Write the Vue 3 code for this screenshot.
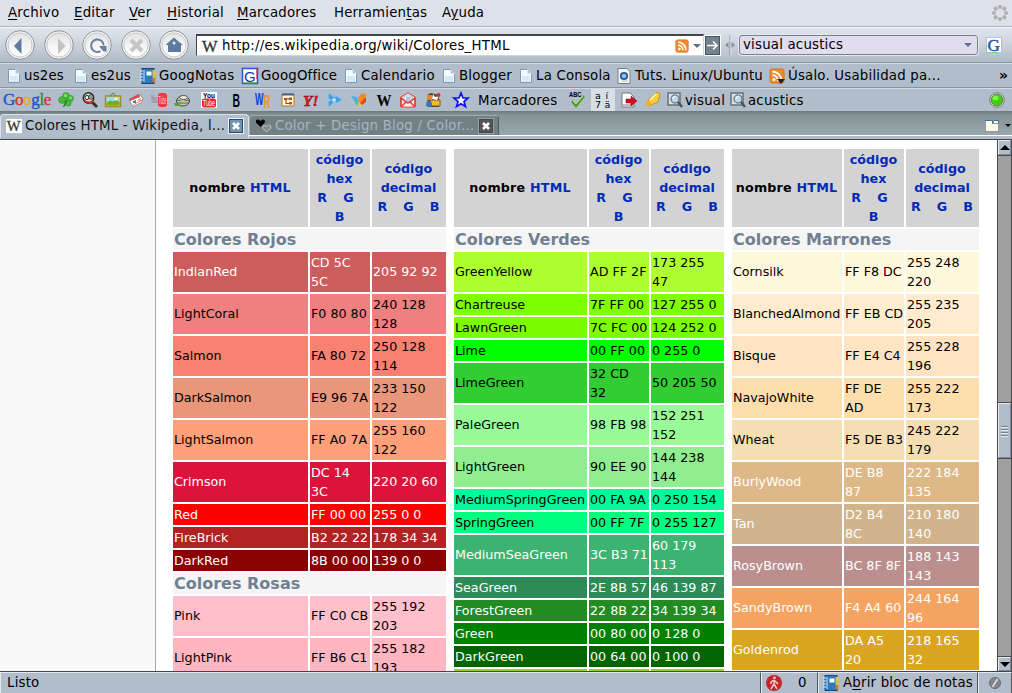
<template>
    <div class="browser">
        <nav class="menu">
            <span v-for="m in menus" :key="m.key" :style="{ width: m.w + 'px' }">{{ m.a }}<u>{{ m.key }}</u>{{ m.b }}</span>
            <svg class="throbber" width="18" height="18" viewBox="0 0 18 18">
                <circle v-for="n in 8" :key="n" cx="9" cy="2.9" r="2.1" :transform="`rotate(${n * 45} 9 9)`" />
            </svg>
        </nav>

        <div class="nav">
            <svg v-for="b in buttons" :key="b" class="round" width="32" height="32" viewBox="0 0 32 32">
                <defs>
                    <linearGradient :id="'g' + b" x2="0" y2="1">
                        <stop offset="0" stop-color="#e2e2e2" />
                        <stop offset=".5" stop-color="#f3f3f3" />
                        <stop offset="1" stop-color="#fff" />
                    </linearGradient>
                </defs>
                <circle cx="16" cy="16" r="14.3" fill="#f0f0f0" stroke="#8f959c" />
                <circle cx="16" cy="16" r="12" :fill="`url(#g${b})`" stroke="#c9c9c9" />
                <g v-html="icons[b]"></g>
            </svg>
            <div class="url">
                <svg width="18" height="16" viewBox="0 0 18 16" v-html="icons.wiki"></svg>
                <span>http://es.wikipedia.org/wiki/Colores_HTML</span>
                <svg class="feed" width="14" height="14" viewBox="0 0 16 16" v-html="icons.rss"></svg>
                <i class="arrow"></i>
            </div>
            <div class="go">
                <svg width="13" height="13" viewBox="0 0 13 13">
                    <path d="M1 6.500H11M7 2.500l4 4-4 4" fill="none" stroke="#fff" stroke-width="1.600" />
                </svg>
            </div>
            <svg class="split" width="10" height="20" viewBox="0 0 10 20">
                <path d="M5 0v20" stroke="#84909a" />
                <path d="M6 0v20" stroke="#e5e9ee" />
                <path d="M0 10l3.500-3v6zM10 10L6.500 7v6z" fill="#84909a" />
            </svg>
            <div class="search"><span>visual acustics</span><i class="arrow"></i></div>
            <svg class="engine" width="16" height="16" viewBox="0 0 16 16" v-html="icons.g"></svg>
        </div>

        <div class="bookmarks">
            <div v-for="b in bookmarks" :key="b.text" class="bookmark" :style="{ width: b.w + 'px' }">
                <svg width="16" height="16" viewBox="0 0 16 16" v-html="icons[b.icon]"></svg>
                <span>{{ b.text }}</span>
            </div>
            <b class="more">»</b>
        </div>

        <div class="tools">
            <div class="google"><b>G</b><b>o</b><b>o</b><b>g</b><b>l</b><b>e</b></div>
            <div v-for="(t, i) in tools" :key="i" class="tool" :class="t[0]" :style="{ width: t[1] + 'px' }">
                <span v-if="t[2]">{{ t[2] }}</span>
                <svg v-else width="16" height="16" viewBox="0 0 16 16" v-html="icons[t[0]]"></svg>
            </div>
            <svg class="status-dot" width="16" height="16" viewBox="0 0 16 16">
                <circle cx="8" cy="8" r="7.300" fill="#e3e7e8" stroke="#777" />
                <circle cx="8" cy="8" r="5.800" fill="#42cf0c" stroke="#587f45" />
                <ellipse cx="6.500" cy="6" rx="3" ry="2.500" fill="#83ec53" />
            </svg>
        </div>

        <div class="tabs">
            <div class="tab active">
                <svg width="16" height="16" viewBox="0 0 18 16"><path d="M0 0h18v16H0z" fill="#fff" /><g v-html="icons.wiki"></g></svg>
                <span>Colores HTML - Wikipedia, l...</span>
                <svg class="close" width="16" height="16" viewBox="0 0 16 16" v-html="icons.close"></svg>
            </div>
            <div class="tab">
                <svg width="18" height="16" viewBox="0 0 18 16" v-html="icons.hearts"></svg>
                <span>Color + Design Blog / Color...</span>
                <svg class="close" width="16" height="16" viewBox="0 0 16 16" v-html="icons.close"></svg>
            </div>
            <svg class="tab-list" width="28" height="16" viewBox="0 0 28 16">
                <path d="M1.500 3.500h7v3h6v8h-13z" fill="#fbfbe5" stroke="#8c9bab" />
                <path d="M1 3.500h7.500v3M10 3.500h4.500v3" fill="none" stroke="#4b6b98" />
                <path d="M10 4h4v2h-4z" fill="#f4f8ff" />
                <path d="M21 7h6l-3 3z" />
            </svg>
        </div>

        <main>
            <aside></aside>
            <div class="page">
                <section v-for="(col, i) in columns" :key="i" :class="'col' + i">
                    <div class="th"><p>nombre <a>HTML</a></p></div>
                    <div class="th"><a>código<br>hex<br><em>R&nbsp;&nbsp;&nbsp; G&nbsp;&nbsp;</em><br>B</a></div>
                    <div class="th"><a>código<br>decimal<br><em>R&nbsp;&nbsp;&nbsp; G&nbsp;&nbsp;&nbsp; B</em></a></div>
                    <template v-for="c in col" :key="c[0]">
                        <h3 v-if="c.length === 1">{{ c[0] }}</h3>
                        <template v-else>
                            <div v-for="n in 3" :key="n" class="td" :class="{ light: c[3] }" :style="{ background: c[0] }">{{ c[n - 1] }}</div>
                        </template>
                    </template>
                </section>
            </div>
            <div class="scroll">
                <div class="knob up"><i></i></div>
                <div class="knob thumb"><i></i><i></i><i></i><i></i></div>
                <div class="knob down"><i></i></div>
            </div>
        </main>

        <footer>
            <div class="ready">Listo</div>
            <div class="count">
                <svg width="16" height="16" viewBox="0 0 16 16">
                    <circle cx="8" cy="8" r="8" fill="#c4242b" />
                    <circle cx="8.500" cy="2.800" r="1.400" fill="#efc9c8" />
                    <path d="M8 5L5 7v2M8 5v4l-3 5M8 9l3 5M8 5l3 3 1 1" fill="none" stroke="#efc9c8" stroke-width="1.500" />
                </svg>
                <span>0</span>
            </div>
            <div class="notes">
                <svg width="16" height="16" viewBox="0 0 16 16" v-html="icons.book"></svg>
                <span>A<u>b</u>rir bloc de notas</span>
            </div>
            <div class="off">
                <svg width="12" height="12" viewBox="0 0 12 12">
                    <circle cx="6" cy="6" r="5.500" fill="#858585" stroke="#6c6c6c" />
                    <path d="M3.500 10L8.500 2" stroke="#dde2e8" stroke-width="1.500" />
                </svg>
            </div>
        </footer>
    </div>
</template>

<script setup>
const menus = [
    { a: '', key: 'A', b: 'rchivo', w: 66 },
    { a: '', key: 'E', b: 'ditar', w: 55 },
    { a: '', key: 'V', b: 'er', w: 38 },
    { a: '', key: 'H', b: 'istorial', w: 70 },
    { a: '', key: 'M', b: 'arcadores', w: 97 },
    { a: 'Herramien', key: 't', b: 'as', w: 108 },
    { a: 'A', key: 'y', b: 'uda', w: 60 }
]

const buttons = ['back', 'forward', 'reload', 'stop', 'home']

const bookmarks = [
    { icon: 'page', text: 'us2es', w: 67 },
    { icon: 'page', text: 'es2us', w: 68 },
    { icon: 'book', text: 'GoogNotas', w: 102 },
    { icon: 'gbox', text: 'GoogOffice', w: 100 },
    { icon: 'page', text: 'Calendario', w: 98 },
    { icon: 'page', text: 'Blogger', w: 77 },
    { icon: 'page', text: 'La Consola', w: 99 },
    { icon: 'tuts', text: 'Tuts. Linux/Ubuntu', w: 153 },
    { icon: 'feed', text: 'Úsalo. Usabilidad pa...', w: 180 }
]

// icon name, slot width, optional label
const tools = [
    ['clover', 24], ['lens', 23], ['photo', 23], ['cards', 23], ['tubeOff', 23], ['burger', 24], ['tube', 30],
    ['bold', 24], ['wr', 29], ['tree', 22], ['yahoo', 24], ['twist', 23], ['butterfly', 25], ['wikiBold', 25],
    ['mail', 23], ['box', 28], ['star', 28], ['label', 90, 'Marcadores'], ['abc', 23], ['accents', 30],
    ['exit', 22], ['marker', 26], ['find', 17], ['label', 46, 'visual'], ['find', 17], ['label', 70, 'acustics']
]

// Each color: name, hex, decimal, light text
const columns = [
    [
        ['Colores Rojos'],
        ['IndianRed', 'CD 5C\n5C', '205 92 92', 1],
        ['LightCoral', 'F0 80 80', '240 128\n128'],
        ['Salmon', 'FA 80 72', '250 128\n114'],
        ['DarkSalmon', 'E9 96 7A', '233 150\n122'],
        ['LightSalmon', 'FF A0 7A', '255 160\n122'],
        ['Crimson', 'DC 14\n3C', '220 20 60', 1],
        ['Red', 'FF 00 00', '255 0 0', 1],
        ['FireBrick', 'B2 22 22', '178 34 34', 1],
        ['DarkRed', '8B 00 00', '139 0 0', 1],
        ['Colores Rosas'],
        ['Pink', 'FF C0 CB', '255 192\n203'],
        ['LightPink', 'FF B6 C1', '255 182\n193']
    ],
    [
        ['Colores Verdes'],
        ['GreenYellow', 'AD FF 2F', '173 255\n47'],
        ['Chartreuse', '7F FF 00', '127 255 0'],
        ['LawnGreen', '7C FC 00', '124 252 0'],
        ['Lime', '00 FF 00', '0 255 0'],
        ['LimeGreen', '32 CD\n32', '50 205 50'],
        ['PaleGreen', '98 FB 98', '152 251\n152'],
        ['LightGreen', '90 EE 90', '144 238\n144'],
        ['MediumSpringGreen', '00 FA 9A', '0 250 154'],
        ['SpringGreen', '00 FF 7F', '0 255 127'],
        ['MediumSeaGreen', '3C B3 71', '60 179\n113', 1],
        ['SeaGreen', '2E 8B 57', '46 139 87', 1],
        ['ForestGreen', '22 8B 22', '34 139 34', 1],
        ['Green', '00 80 00', '0 128 0', 1],
        ['DarkGreen', '00 64 00', '0 100 0', 1],
        ['YellowGreen', '', '']
    ],
    [
        ['Colores Marrones'],
        ['Cornsilk', 'FF F8 DC', '255 248\n220'],
        ['BlanchedAlmond', 'FF EB CD', '255 235\n205'],
        ['Bisque', 'FF E4 C4', '255 228\n196'],
        ['NavajoWhite', 'FF DE\nAD', '255 222\n173'],
        ['Wheat', 'F5 DE B3', '245 222\n179'],
        ['BurlyWood', 'DE B8\n87', '222 184\n135', 1],
        ['Tan', 'D2 B4\n8C', '210 180\n140', 1],
        ['RosyBrown', 'BC 8F 8F', '188 143\n143', 1],
        ['SandyBrown', 'F4 A4 60', '244 164\n96', 1],
        ['Goldenrod', 'DA A5\n20', '218 165\n32', 1]
    ]
]

const rss = '<rect x="1" y="1" width="14" height="14" rx="2" fill="#f18a2b" stroke="#d9741b"/><circle cx="5" cy="11.500" r="1.500" fill="#fff"/><path d="M3.500 7a6 6 0 0 1 5.500 6M3.500 3.500a9.500 9.500 0 0 1 9 9.500" fill="none" stroke="#fff" stroke-width="1.800"/>'
const serif = 'font-family="Liberation Serif, serif"'
const sans = 'font-family="Liberation Sans, sans-serif"'

const icons = {
    back: '<path d="M10 17L17.500 9v16z" fill="#5f7a9f"/>',
    forward: '<path d="M22.500 17L15 9v16z" fill="#c3c3c3"/>',
    reload: '<path d="M19.500 22.200a6.300 6.300 0 1 1 3.200-5.700" fill="none" stroke="#6880a0" stroke-width="2"/><path d="M18 17h7.500v5.500h-3z" fill="#6880a0"/>',
    stop: '<path d="M11 11l11 11M22 11L11 22" stroke="#c5c5c5" stroke-width="4"/>',
    home: '<path d="M7.500 16L12 12l4-3.500 4 3.500 5 4h-2v7H10v-7z" fill="#5f7a9f"/><circle cx="16" cy="14" r="1.500" fill="#eee"/>',
    wiki: `<text x="1" y="13.500" ${serif} font-size="16" textLength="15.500" lengthAdjust="spacingAndGlyphs" fill="#333" stroke="#333" stroke-width=".3">W</text>`,
    rss,
    feed: rss + '<path d="M8 11h8l-4 5z" fill="#222"/>',
    g: `<rect x=".5" y=".5" width="15" height="15" fill="#fff" stroke="#b3c6e8"/><path d="M15.500 0v12" stroke="#e8a6a6"/><path d="M0 15.500h12M.5 8v8" stroke="#8ccf8c"/><text x="1.500" y="13.500" ${serif} font-size="17" fill="#2952a8" stroke="#2952a8" stroke-width=".5">G</text>`,
    gbox: `<rect x=".5" y=".5" width="15" height="15" fill="#fff" stroke="#2a56cc" stroke-width="1.500"/><path d="M15.200 1v10" stroke="#d22" stroke-width="1.500"/><path d="M2 15.200h13" stroke="#2a9a2a" stroke-width="1.500"/><text x="2" y="13.500" ${sans} font-size="15" fill="#1538bd">G</text>`,
    page: '<path d="M3.500 1.500h7l4 4v9h-11z" fill="#f5fbff" stroke="#7e9abb"/><path d="M5 8h8v6H5z" fill="#d5eaf7"/><path d="M10.500 1.500v4h4z" fill="#9dc2e0" stroke="#e9f5ff" stroke-width=".5"/>',
    book: '<rect x="2" y=".5" width="12" height="15" fill="#2d79bd" stroke="#164a7a"/><path d="M4 2v12" stroke="#75b3e2" stroke-width="2"/><path d="M6.500 3.500h5v4h-5z" fill="#fff"/><path d="M14 2v4" stroke="#f3bd35" stroke-width="3"/><path d="M14 6v4" stroke="#b8cc4b" stroke-width="3"/><path d="M14 10v4" stroke="#d47b2e" stroke-width="3"/><path d="M0 3h3M0 6h3M0 9h3M0 12h3" stroke="#e4f2fc"/>',
    tuts: '<path d="M2 .5h9l3 3v12H2z" fill="#f6f6ef" stroke="#777c80"/><circle cx="8" cy="8" r="3.200" fill="#8ec0e8" stroke="#285a9b" stroke-width="1.800"/><path d="M6 13h6" stroke="#b6c5cf"/>',
    clover: '<g fill="#4ab83e" stroke="#2c9a2c" stroke-width=".6"><circle cx="8" cy="4" r="3.400"/><circle cx="4" cy="8" r="3.400"/><circle cx="12.300" cy="6.500" r="3.200"/><circle cx="10" cy="11" r="3.200"/></g><path d="M8.500 8q-1 4-3 7" fill="none" stroke="#207b21" stroke-width="1.300"/><circle cx="7.500" cy="3.500" r="1.600" fill="#8ae373"/><circle cx="12.500" cy="6" r="1.400" fill="#7bdb66"/>',
    lens: '<path d="M10 10l5 5" stroke="#333" stroke-width="3"/><circle cx="6.500" cy="6" r="5.200" fill="#ddd6bb" stroke="#282828" stroke-width="1.500"/><circle cx="5" cy="5.500" r="2" fill="#fff" stroke="#222"/><circle cx="9" cy="5" r="2.200" fill="#fff" stroke="#222"/><circle cx="9" cy="5" r=".8"/><path d="M3 9q4 3 8 0" stroke="#cc2c23" stroke-width="2" fill="none"/>',
    photo: '<path d="M5 4l3-3 3 3" stroke="#776d36" fill="none"/><rect x=".5" y="4" width="15" height="10.500" fill="#9cdaf0" stroke="#ac8b1e" stroke-width="1.500"/><path d="M1.500 13.500v-3l4-2 3 1 3-2 3 3v3z" fill="#75ab20"/><circle cx="11" cy="7" r="1.500" fill="#fff7ad"/>',
    cards: '<path d="M1 8l10-6 4 4-1 4-9 5z" fill="#fff" stroke="#aa8383"/><path d="M1 7l10-5 1 3-10 4z" fill="#d84a4a"/><path d="M5 9l3-1v3H5z" fill="#4979be"/><path d="M10 7l3-1v3h-3z" fill="#ecac6a"/><path d="M5 13l9-5" stroke="#d38888"/>',
    tubeOff: `<text x="0" y="11" ${sans} font-size="10" font-weight="bold" textLength="6.500" lengthAdjust="spacingAndGlyphs" fill="#85888b">You</text><rect x="7" y="1" width="9" height="14" rx="3" fill="#ed373c"/><text x="7.500" y="12" ${sans} font-size="11" textLength="8" lengthAdjust="spacingAndGlyphs" fill="#ffd8d8">Tube</text>`,
    burger: '<ellipse cx="9" cy="9" rx="6.500" ry="5" fill="#c3c7c2" stroke="#3e4443"/><ellipse cx="9.500" cy="5.500" rx="4" ry="2" fill="#f0f0eb" stroke="#555"/><path d="M3 8q6 3 12 0M3 11h12" fill="none" stroke="#555d5a"/><path d="M0 11h6v3H1z" fill="#5f9e36"/><path d="M7 9l5 1" stroke="#e1c641" stroke-width="1.500"/>',
    tube: `<path d="M0 0h16v16H0z" fill="#fff"/><rect x="1" y="6.500" width="14" height="9" rx="2" fill="#ee2229"/><text x="2" y="6" ${sans} font-size="7.500" font-weight="bold" textLength="12" lengthAdjust="spacingAndGlyphs">You</text><text x="2" y="14" ${sans} font-size="9" textLength="12" lengthAdjust="spacingAndGlyphs" fill="#fff">Tube</text>`,
    bold: `<text x="4.500" y="14.500" ${sans} font-size="19" font-weight="bold" textLength="7.500" lengthAdjust="spacingAndGlyphs">B</text>`,
    wr: `<text x="0" y="12.500" ${sans} font-size="16" font-weight="bold" textLength="8.500" lengthAdjust="spacingAndGlyphs" fill="#1238d8">W</text><text x="8.500" y="15.500" ${sans} font-size="18" font-weight="bold" textLength="7" lengthAdjust="spacingAndGlyphs" fill="#ee9431">R</text>`,
    tree: '<path d="M2 2h12v12H2z" fill="#fffbdd" stroke="#bb7612"/><path d="M2 2.500h12" stroke="#3c63a0" stroke-width="2"/><path d="M6 7v5M6 7h3M6 11.500h3" stroke="#a32d16" fill="none"/><path d="M4 6h3v2H4zM9 5.500h3v2.500H9zM9 10h3v2.500H9z" fill="#bf4d22"/>',
    yahoo: `<text x="0" y="14" ${serif} font-size="15" font-weight="bold" font-style="italic" fill="#e9101c" stroke="#8e0710" stroke-width=".5" textLength="15.500" lengthAdjust="spacingAndGlyphs">Y!</text>`,
    twist: '<path d="M2 1l5 4 3-1 5 4-5 3-3-1-5 5-1-5 3-2-3-2z" fill="#4b9edb" stroke="#7cc3ef"/><circle cx="7" cy="8" r="2" fill="#b3e4fa"/>',
    butterfly: '<path d="M0 4l6 1 2 6-4-1z" fill="#4aaee9"/><path d="M7.500 9q-1-7 6-8l2 3-5 7z" fill="#f08a25"/><path d="M9 11l6-6v5l-4 3z" fill="#f04020"/><path d="M3 10l5 1-1 3z" fill="#7dbb36"/><path d="M7 11l4 2-3 2z" fill="#f5cb28"/>',
    wikiBold: `<text x=".5" y="13.500" ${serif} font-size="16" font-weight="bold" textLength="15" lengthAdjust="spacingAndGlyphs">W</text>`,
    mail: '<path d="M1 5l7-4 7 4v10H1z" fill="#fff1ee" stroke="#dd403a"/><path d="M4 4h8v6H4z" fill="#fff" stroke="#a9b7d7"/><path d="M1 15V6l7 5 7-5v9M1 15l5-5M15 15l-5-5" fill="none" stroke="#dd403a" stroke-width="1.500"/><path d="M6 6h5M6 8h4" stroke="#6e86c9"/>',
    box: '<path d="M2 3l4-2 8 2v12H3z" fill="#4b4734"/><path d="M5 8h10v6H6z" fill="#f1ba2e" stroke="#795715"/><circle cx="4" cy="12" r="3" fill="#3a72c4"/><path d="M2 3h5v5H2z" fill="#e7852f"/><path d="M8 2l2 3 4-1-2 4-5-1z" fill="#fff"/><circle cx="13.500" cy="3" r="2" fill="#d92f27"/>',
    star: '<path d="M8 1l2 5h5l-4 3.500 1.500 5L8 11.700 3.500 14.500l1.500-5L1 6h5z" fill="#f5f6ff" stroke="#1111e8" stroke-width="1.700"/>',
    abc: `<text x="0" y="5" ${sans} font-size="7" font-weight="bold" textLength="12.500" lengthAdjust="spacingAndGlyphs">ABC</text><path d="M3 9l4 5 8-10" fill="none" stroke="#4e9d22" stroke-width="2.500"/><path d="M4 9l3 3 7-8" fill="none" stroke="#a8e375"/>`,
    accents: '<g font-family="DejaVu Sans, sans-serif" font-size="9.500"><text x="0" y="6.500">a</text><text x="10.500" y="6.500">í</text><text x="0" y="16">7</text><text x="9.500" y="16">ä</text></g>',
    exit: '<path d="M1 1h8l4 4v10H1z" fill="#fff" stroke="#777"/><path d="M2 12h10v3H2z" fill="#bbb"/><path d="M5 7h5V4l6 5-6 5v-3H5z" fill="#d50c22" stroke="#8e0012" stroke-width=".5"/>',
    marker: '<path d="M3 8l9-8 3 2-2 8-7 3z" fill="#f9cd37" stroke="#b7790d" stroke-width=".7"/><path d="M3 8l-3 5 4 2 3-3z" fill="#f7ad20"/><path d="M5 8l6-6" stroke="#fff0a7" stroke-width="2"/>',
    find: '<path d="M1 1h12v12H1z" fill="#dae3e9" stroke="#697077" stroke-width="1.500"/><circle cx="8" cy="7" r="4" fill="#b8dced" stroke="#77838c" stroke-width="1.500"/><path d="M11 10l4 5" stroke="#4d5359" stroke-width="2.500"/><path d="M6 7q0-3 3-3" fill="none" stroke="#fff"/>',
    close: '<rect x=".5" y=".5" width="15" height="15" fill="none" stroke="var(--rim)"/><rect x="1.500" y="1.500" width="13" height="13" fill="var(--face)" stroke="#3a4856"/><path d="M5 5l6 6M11 5l-6 6" stroke="#fff" stroke-width="2.500"/>',
    hearts: '<path d="M5.500 9L1 4.500Q.500 1 3.500 1.500L5.500 3l2-1.500Q11 1 9.500 5z" fill="#000"/><path d="M11.500 14L7.500 10Q7.500 7 10 7.500l1.500 1 2-1.500q3 0 2.500 3z" fill="#898989" stroke="#d8dada" stroke-width=".7"/>'
}
</script>

<style>
html,
body {
    margin: 0;
    overflow: hidden;
}
</style>

<style scoped>
.browser {
    width: 1012px;
    height: 693px;
    display: grid;
    grid-template-rows: 27px 36px 25px 23px 29px 531px 22px;
    overflow: hidden;
    background: #b2bdcb;
    color: #000;
    font: 13.33px/18px "DejaVu Sans", sans-serif;
    letter-spacing: .2px;
    white-space: nowrap;
}

.browser * {
    box-sizing: border-box;
}

svg {
    display: block;
    flex: none;
    overflow: visible;
    letter-spacing: 0;
}

u {
    text-underline-offset: 2px;
    text-decoration-thickness: 1px;
}

.menu {
    display: flex;
    align-items: center;
    padding: 0 3px 0 8px;
    background: #dde2ea;
    border-bottom: 1px solid #abb5c0;
}

.throbber {
    margin-left: auto;
    fill: #b1b1b1;
}

.nav {
    display: flex;
    align-items: center;
    padding: 0 10px 0 4px;
    background: linear-gradient(#e0e6ed, #cfd6df 40%, #aebac7);
    border-top: 1px solid #f5f7fa;
    border-bottom: 1px solid #8996a1;
}

.round {
    margin-right: 6.5px;
}

.url {
    display: flex;
    align-items: center;
    width: 508px;
    height: 22px;
    margin-left: -.5px;
    padding: 0 2px 0 4px;
    background: #fff;
    border: 1px solid #d6d2cc;
    border-top: 2px solid #444;
    border-left-color: #444;
}

.url span {
    flex: 1;
    padding-left: 3px;
    letter-spacing: .24px;
}

.arrow {
    width: 0;
    height: 0;
    border: 4px solid transparent;
    border-top-color: #58738e;
    border-bottom: 0;
}

.feed {
    margin-right: 4px;
}

.go {
    display: grid;
    place-items: center;
    width: 17px;
    height: 21px;
    background: #73838f;
    border: 1px solid #fff;
    outline: 1px solid #46525c;
    outline-offset: -2px;
}

.split {
    margin: 0 4px;
}

.search {
    display: flex;
    align-items: center;
    width: 239px;
    height: 20px;
    margin-right: 8px;
    padding: 0 5px 0 3px;
    background: #e1dcee;
    border: 1px solid #7c7f86;
    border-radius: 3px;
    box-shadow: 0 0 0 1px #e6e9ee;
}

.search span {
    flex: 1;
}

.bookmarks {
    display: flex;
    align-items: center;
    padding-left: 5px;
    border-top: 1px solid #d4dbe3;
    border-bottom: 1px solid #8996a1;
}

.bookmark {
    display: flex;
    align-items: center;
    gap: 3px;
}

.more {
    margin: -2px 0 0 50px;
    font-size: 14px;
}

.tools {
    display: flex;
    align-items: center;
    border-top: 1px solid #d4dbe3;
    padding-right: 7px;
}

.google {
    width: 54px;
    padding-left: 3px;
    font: 17px/20px "Liberation Serif", serif;
    letter-spacing: -.35px;
}

.google b {
    font-weight: normal;
    color: #2057c7;
    -webkit-text-stroke: .4px;
}

.google b:nth-child(2),
.google b:nth-child(6) {
    color: #d43730;
}

.google b:nth-child(3) {
    color: #dfad1e;
}

.google b:nth-child(5) {
    color: #299146;
}

.tool {
    display: flex;
    justify-content: center;
}

.tool.label {
    justify-content: flex-start;
    padding: 1px 0 0 2px;
}

.tool.label:nth-child(19) {
    padding-left: 3px;
}

.tool.accents {
    height: 22px;
    align-items: center;
    background: #d9dfe7;
    border: solid #b2bdcb;
    border-width: 0 3px;
}

.status-dot {
    margin-left: auto;
}

.tabs {
    display: flex;
    height: 29px;
    padding-top: 4px;
    background: linear-gradient(#6c7a7c, #849396 4px, #9aa8ad 24px, #fff 24px, #fff 25px, #b2bdcb 25px, #b2bdcb 28px, #40464c 28px);
}

.tab {
    --face: #555;
    --rim: #9a9fa2;
    display: flex;
    align-items: center;
    width: 250px;
    height: 20px;
    padding-left: 5px;
    color: #a7b5c1;
    background: #738184;
    border: 1px solid #9eaaae;
    border-right-color: #4d5a5d;
    border-bottom: 0;
    border-radius: 4px 4px 0 0;
}

.tab span {
    flex: 1;
    padding-left: 2px;
}

.tab .close {
    margin-right: 4px;
}

.tab.active {
    --face: #6f93b5;
    --rim: #eef2f5;
    width: 249px;
    height: 24px;
    margin-top: -1px;
    padding-bottom: 1px;
    color: #111;
    background: #b2bdcb;
    border-color: #dce2e8;
}

.tab.active span {
    padding-left: 3px;
}

.tab-list {
    margin: 2px 0 0 auto;
}

main {
    display: grid;
    grid-template-columns: 156px 841px 15px;
    overflow: hidden;
    background: #fff;
}

aside {
    background: #f9f9f9;
    border-right: 1px solid #aaa;
}

.page {
    display: flex;
    align-items: flex-start;
    gap: 8px;
    padding: 9px 0 0 17px;
    height: 531px;
    overflow: hidden;
    font-size: 12.7px;
    line-height: 19px;
    letter-spacing: 0;
}

section {
    display: grid;
    grid-template-columns: 133px 60px 73px;
    gap: 2px;
}

.col0 {
    grid-template-columns: 135px 60px 74px;
}

.col2 {
    grid-template-columns: 110px 60px 73px;
}

.th {
    display: flex;
    align-items: center;
    justify-content: center;
    height: 78px;
    padding: 0 1px .2px 0;
    background: #d3d3d3;
    font-weight: bold;
    text-align: center;
}

.th p {
    margin: 0;
    letter-spacing: .2px;
}

.th a {
    color: #002bb8;
}

.th em {
    font-style: normal;
    word-spacing: -.4px;
}

h3 {
    grid-column: 1 / 4;
    height: 21px;
    margin: 0;
    padding: 1px;
    color: #708090;
    background: #f5f5f5;
    font-size: 16px;
    line-height: 19px;
}

/* Uneven padding drops the half pixel of the centered single lines */
.td {
    display: flex;
    align-items: center;
    padding: .9px 1px 1.1px;
    min-height: 21px;
    white-space: pre;
}

.td.light {
    color: #fff;
}

.scroll {
    display: flex;
    flex-direction: column;
    background: #9f9f9f;
    border-left: 1px solid #4b4b4b;
    border-right: 1px solid #4b4b4b;
}

.knob {
    display: flex;
    flex-direction: column;
    align-items: center;
    justify-content: center;
    height: 15px;
    background: #b2bdcb;
    border: 1px solid #e5eaf0;
    border-right-color: #7d8996;
    border-bottom-color: #7d8996;
    box-shadow: 0 1px #4b4b4b;
}

.up i,
.down i {
    border: 5px solid transparent;
    border-bottom-color: #000;
    border-top: 0;
}

.down {
    height: 14px;
    margin-top: auto;
    box-shadow: 0 -1px #4b4b4b;
}

.down i {
    border-top: 5px solid #000;
    border-bottom: 0;
}

.thumb {
    height: 55px;
    margin-top: 248px;
    gap: 2px;
    box-shadow: 0 1px #4b4b4b, 0 -1px #4b4b4b;
}

.thumb i {
    width: 7px;
    height: 1px;
    background: #77818c;
    box-shadow: 0 1px #e6ebf0;
}

footer {
    display: flex;
    border-top: 1px solid #3f4650;
}

footer div {
    display: flex;
    align-items: center;
    border-top: 1px solid #e3e8ed;
    border-left: 1px solid #e3e8ed;
    border-right: 1px solid #4e5660;
}

.ready {
    width: 761px;
    padding-left: 6px;
}

.count {
    width: 57px;
    padding-left: 4px;
    gap: 16px;
}

.notes {
    width: 160px;
    padding-left: 4px;
    gap: 4px;
}

.off {
    flex: 1;
    padding-left: 10px;
}
</style>
